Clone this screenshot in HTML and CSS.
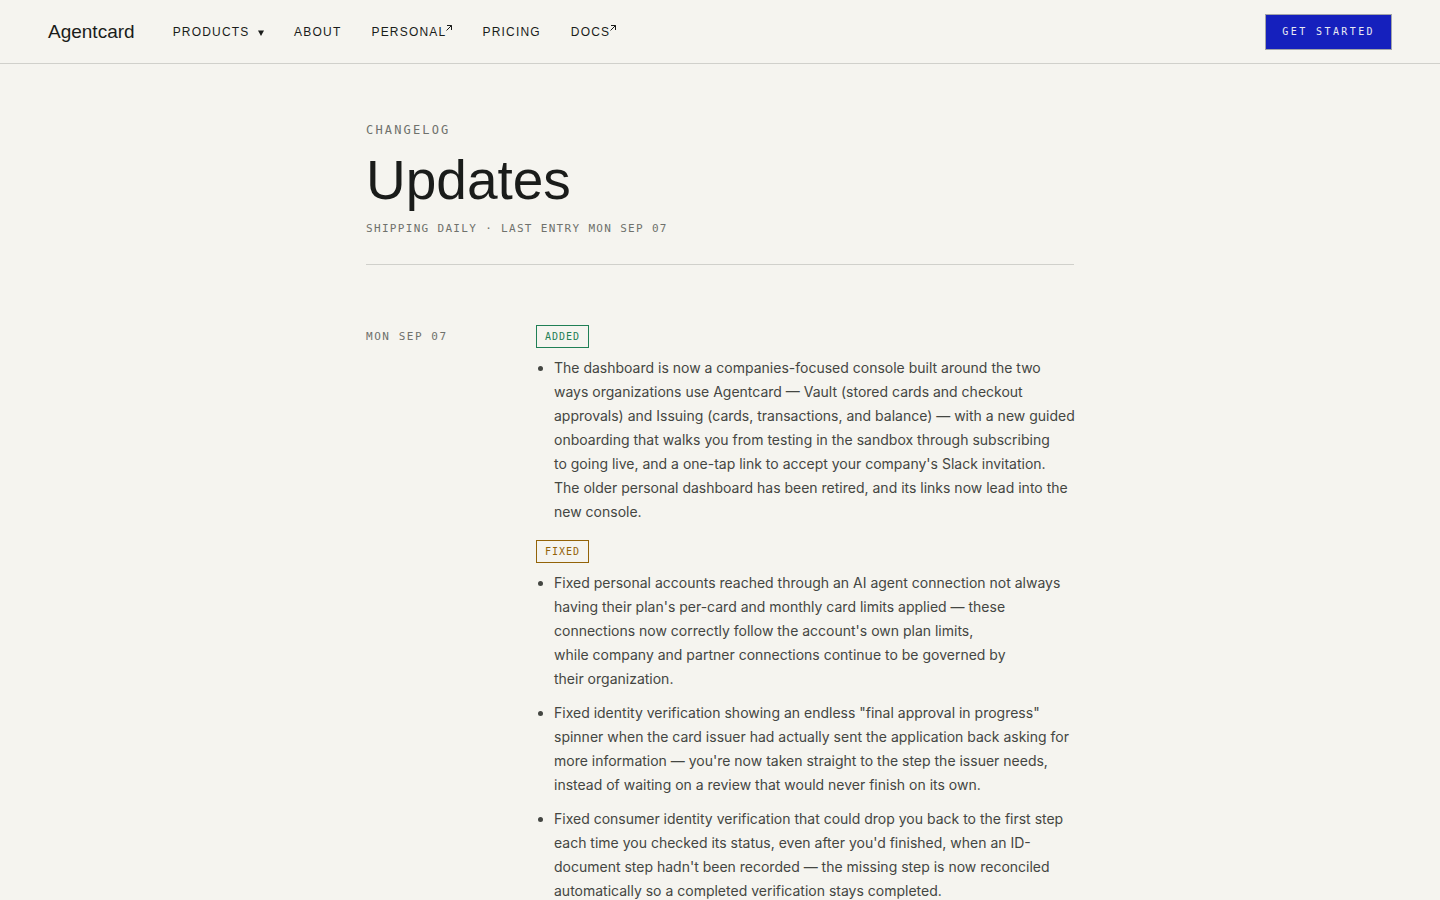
FILE: index.html
```html
<!DOCTYPE html>
<html lang="en">
<head>
    <meta charset="UTF-8">
    <meta name="viewport" content="width=device-width, initial-scale=1.0">
    <title>Updates - Agentcard</title>
    <link rel="stylesheet" href="styles.css">
</head>
<body>

    <header class="site-header">
        <a class="logo" href="#">Agentcard</a>
        <nav class="nav">
            <button class="nav-link nav-menu" type="button">Products <svg class="caret" viewBox="0 0 6 6" aria-hidden="true"><path d="M0 0.5h6L3 6z"/></svg></button>
            <a class="nav-link" href="#">About</a>
            <a class="nav-link" href="#">Personal<svg class="arrow" viewBox="0 0 6 7" aria-hidden="true"><path d="M0.5 6.5L5.5 1.5M1 1.5h4.5V6"/></svg></a>
            <a class="nav-link" href="#">Pricing</a>
            <a class="nav-link" href="#">Docs<svg class="arrow" viewBox="0 0 6 7" aria-hidden="true"><path d="M0.5 6.5L5.5 1.5M1 1.5h4.5V6"/></svg></a>
        </nav>
        <button class="cta" type="button">Get started</button>
    </header>

    <main class="container">
        <div class="page-head">
            <p class="eyebrow">Changelog</p>
            <h1>Updates</h1>
            <p class="meta">Shipping daily · Last entry Mon Sep 07</p>
        </div>

        <article class="entry">
            <time class="date" datetime="09-07">Mon Sep 07</time>
            <div class="changes">
                <section class="group">
                    <h2 class="tag added">Added</h2>
                    <ul>
                        <li>The dashboard is now a companies-focused console built around the two<br>
                            ways organizations use Agentcard — Vault (stored cards and checkout<br>
                            approvals) and Issuing (cards, transactions, and balance) — with a new guided<br>
                            onboarding that walks you from testing in the sandbox through subscribing<br>
                            to going live, and a one-tap link to accept your company's Slack invitation.<br>
                            The older personal dashboard has been retired, and its links now lead into the<br>
                            new console.</li>
                    </ul>
                </section>
                <section class="group">
                    <h2 class="tag fixed">Fixed</h2>
                    <ul>
                        <li>Fixed personal accounts reached through an AI agent connection not always<br>
                            having their plan's per-card and monthly card limits applied — these<br>
                            connections now correctly follow the account's own plan limits,<br>
                            while company and partner connections continue to be governed by<br>
                            their organization.</li>
                        <li>Fixed identity verification showing an endless "final approval in progress"<br>
                            spinner when the card issuer had actually sent the application back asking for<br>
                            more information — you're now taken straight to the step the issuer needs,<br>
                            instead of waiting on a review that would never finish on its own.</li>
                        <li>Fixed consumer identity verification that could drop you back to the first step<br>
                            each time you checked its status, even after you'd finished, when an ID-<br>
                            document step hadn't been recorded — the missing step is now reconciled<br>
                            automatically so a completed verification stays completed.</li>
                    </ul>
                </section>
            </div>
        </article>
    </main>

</body>
</html>
```
FILE: styles.css
```css
/* General */
* {
    box-sizing: border-box;
}
body {
    font-family: Inter, "Liberation Sans", sans-serif;
    background-color: #f5f4ef;
    color: #1a1c1a;
    margin: 0;
}
h1, h2, p, ul {
    margin: 0;
}
a {
    color: inherit;
    text-decoration: none;
}
button {
    cursor: pointer;
}

/* Header */
.site-header {
    display: flex;
    align-items: center;
    height: 64px;
    padding: 0 48px;
    border-bottom: 1px solid #d0d0cb;
}
.logo {
    font-family: "Liberation Sans Narrow", "Liberation Sans", sans-serif;
    font-size: 19px;
    margin-right: 38px;
}
.nav {
    display: flex;
    align-items: center;
    gap: 30px;
}
.nav-link {
    font-family: "Liberation Sans", Arial, sans-serif;
    font-size: 12px;
    line-height: 16px;
    letter-spacing: 0.1em;
    text-transform: uppercase;
}
.nav-menu {
    background: none;
    border: none;
    padding: 0;
    color: inherit;
}
.caret {
    width: 6px;
    height: 6px;
    margin-left: 4px;
    fill: currentColor;
}
.arrow {
    width: 6px;
    height: 7px;
    vertical-align: top;
    fill: none;
    stroke: currentColor;
}
.cta {
    margin-left: auto;
    padding: 0 16px;
    height: 36px;
    background: #1520bd;
    border: 1px solid #a3a5a8;
    color: #e9eaf2;
    font-family: "DejaVu Sans Mono", monospace;
    font-size: 10px;
    letter-spacing: 0.24em;
    text-transform: uppercase;
}

/* Page heading */
.container {
    max-width: 756px;
    margin: 0 auto;
    padding: 56px 24px;
}
.page-head {
    padding-bottom: 26px;
    border-bottom: 1px solid #d0d0cb;
}
.eyebrow,
.meta,
.date,
.tag {
    font-family: "DejaVu Sans Mono", monospace;
    font-weight: normal;
    text-transform: uppercase;
}
.eyebrow,
.meta,
.date {
    color: #6f716c;
}
.eyebrow {
    font-size: 12px;
    line-height: 20px;
    letter-spacing: 0.18em;
}
h1 {
    font-family: "Liberation Sans", Arial, sans-serif;
    font-size: 55px;
    font-weight: normal;
    line-height: 60px;
    margin: 10px 0;
}
.meta {
    font-size: 11px;
    line-height: 18px;
    letter-spacing: 0.12em;
}

/* Entries */
.entry {
    display: grid;
    grid-template-columns: 138px 1fr;
    gap: 32px;
    padding-top: 60px;
}
.date {
    font-size: 11px;
    line-height: 24px;
    letter-spacing: 0.14em;
}
.changes {
    display: flex;
    flex-direction: column;
    gap: 16px;
}
.group {
    display: flex;
    flex-direction: column;
    align-items: flex-start;
    gap: 8px;
}
.tag {
    padding: 0 8px;
    border: 1px solid;
    font-size: 10px;
    line-height: 21px;
    letter-spacing: 0.1em;
}
.added {
    color: #1f7f55;
}
.fixed {
    color: #936308;
}
ul {
    padding-left: 18px;
    color: #444642;
    font-size: 14px;
    line-height: 24px;
}
li + li {
    margin-top: 10px;
}
@media (min-width: 760px) {
    li {
        white-space: nowrap;
    }
}
```
